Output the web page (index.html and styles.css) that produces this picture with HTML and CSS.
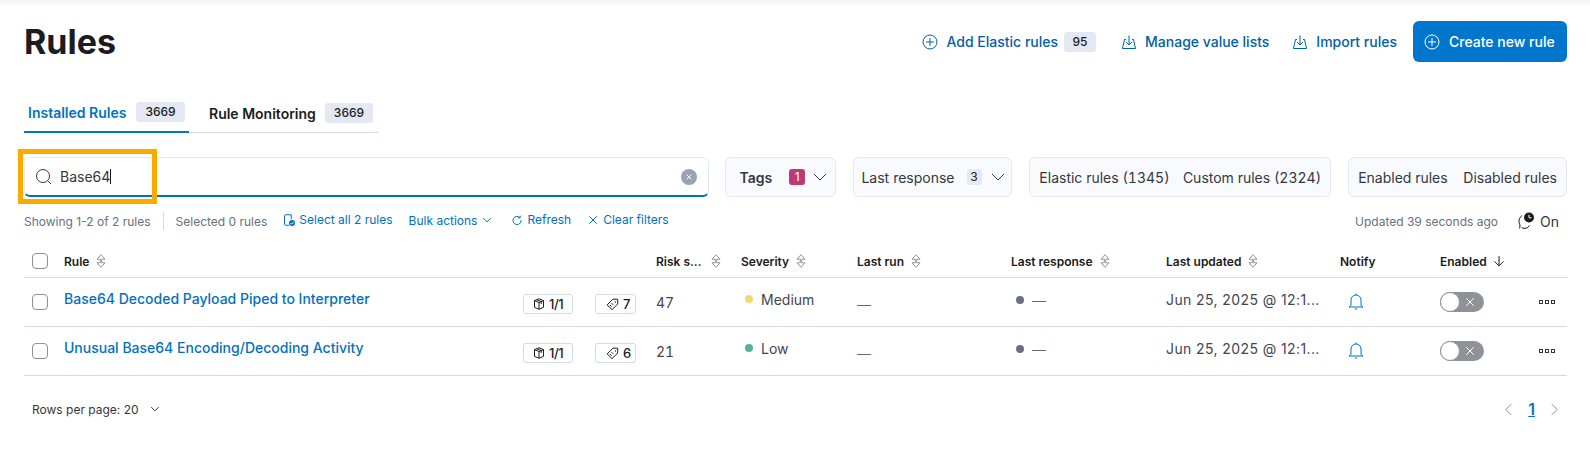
FILE: index.html
```html
<!DOCTYPE html>
<html lang="en">
<head>
<meta charset="utf-8">
<title>Rules</title>
<link rel="stylesheet" href="styles.css">
</head>
<body>
<div class="top-shadow"></div>
<main class="page">
  <header class="page-header">
    <h1 class="title">Rules</h1>
    <div class="actions">
      <a class="action action-add">
        <svg class="ic16" viewBox="0 0 16 16"><circle cx="8" cy="8" r="7" class="st"/><path d="M8 4v8M4 8h8" class="st"/></svg>
        <span>Add Elastic rules</span><span class="badge badge-add">95</span>
      </a>
      <a class="action action-manage">
        <svg class="ic16" viewBox="0 0 16 16"><path d="M5 5.500H3.500L1.500 14.500h13L12.500 5.500H11M8 1.500v9.500M5 8l3 3 3-3" class="st"/></svg>
        <span>Manage value lists</span>
      </a>
      <a class="action action-import">
        <svg class="ic16" viewBox="0 0 16 16"><path d="M5 5.500H3.500L1.500 14.500h13L12.500 5.500H11M8 1.500v9.500M5 8l3 3 3-3" class="st"/></svg>
        <span>Import rules</span>
      </a>
      <a class="create">
        <svg class="ic16" viewBox="0 0 16 16"><circle cx="8" cy="8" r="7" class="st"/><path d="M8 4v8M4 8h8" class="st"/></svg>
        <span>Create new rule</span>
      </a>
    </div>
  </header>

  <nav class="tabs">
    <a class="tab tab-active"><span>Installed Rules</span><span class="badge">3669</span></a>
    <a class="tab"><span>Rule Monitoring</span><span class="badge">3669</span></a>
  </nav>

  <section class="filters">
    <div class="search">
      <svg class="ic16 search-ic" viewBox="0 0 16 16"><circle cx="7" cy="7" r="6.500" class="st"/><path d="m11.700 11.700 3.300 3.300" class="st"/></svg>
      <span class="search-text">Base64</span><span class="caret"></span>
      <span class="clear"><svg viewBox="0 0 16 16"><path d="m5.500 5.500 5 5M10.500 5.500l-5 5" class="st"/></svg></span>
      <span class="highlight"></span>
    </div>
    <div class="fgroup f-tags">
      <span class="strong">Tags</span><span class="count count-pink">1</span>
      <svg class="chev" viewBox="0 0 16 16"><path d="m2 5 6 6 6-6" class="st"/></svg>
    </div>
    <div class="fgroup f-resp">
      <span>Last response</span><span class="count">3</span>
      <svg class="chev" viewBox="0 0 16 16"><path d="m2 5 6 6 6-6" class="st"/></svg>
    </div>
    <div class="fgroup f-pair">
      <span>Elastic rules (1345)</span><span>Custom rules (2324)</span>
    </div>
    <div class="fgroup f-pair f-enabled">
      <span>Enabled rules</span><span>Disabled rules</span>
    </div>
  </section>

  <section class="status">
    <span class="muted">Showing 1-2 of 2 rules</span>
    <span class="divider"></span>
    <span class="muted">Selected 0 rules</span>
    <a class="slink s-select">
      <svg class="ic12" viewBox="0 0 16 16"><path d="M11 7V1H3a2 2 0 0 0-1 1v12l1 1h5" class="st"/><circle cx="12" cy="12" r="4" class="fill"/><path d="m10 12 1.500 1.500 2.500-2.500" class="st-w"/></svg>
      <span>Select all 2 rules</span>
    </a>
    <a class="slink s-bulk"><span>Bulk actions</span><svg class="ic10" viewBox="0 0 16 16"><path d="m2 5 6 6 6-6" class="st"/></svg></a>
    <a class="slink s-refresh">
      <svg class="ic10" viewBox="0 0 16 16"><path d="M12.500 4A6.500 6.500 0 1 0 14.500 8" class="st"/><path d="M9.500 4.500h3.500V1" class="st"/></svg>
      <span>Refresh</span>
    </a>
    <a class="slink s-clear">
      <svg class="ic10" viewBox="0 0 16 16"><path d="m2 2 12 12M14 2 2 14" class="st"/></svg>
      <span>Clear filters</span>
    </a>
    <span class="muted updated">Updated 39 seconds ago</span>
    <svg class="refresh-clock" viewBox="0 0 18 18"><path d="M5 3.500A7 7 0 0 0 3 13M4.800 15.500 7 16.500M3 13l-.300 3.500M12.500 13.500A6 6 0 0 1 7 16.500" class="st"/><circle cx="12" cy="5.500" r="5" class="fill"/><path d="M12 2.800v3h2.500" class="st-w"/></svg>
    <span class="on">On</span>
  </section>

  <section class="table">
    <div class="row head">
      <span class="cell-check"><span class="checkbox"></span></span>
      <span class="th th-rule">Rule<svg class="sort" viewBox="0 0 10 14"><path d="M5 .700 1 5.200h3.300v3.600H1l4 4.500 4-4.500H5.700V5.200H9z" class="st"/></svg></span>
      <span class="th">Risk s...<svg class="sort sort-risk" viewBox="0 0 10 14"><path d="M5 .700 1 5.200h3.300v3.600H1l4 4.500 4-4.500H5.700V5.200H9z" class="st"/></svg></span>
      <span class="th">Severity<svg class="sort" viewBox="0 0 10 14"><path d="M5 .700 1 5.200h3.300v3.600H1l4 4.500 4-4.500H5.700V5.200H9z" class="st"/></svg></span>
      <span class="th">Last run<svg class="sort" viewBox="0 0 10 14"><path d="M5 .700 1 5.200h3.300v3.600H1l4 4.500 4-4.500H5.700V5.200H9z" class="st"/></svg></span>
      <span class="th">Last response<svg class="sort" viewBox="0 0 10 14"><path d="M5 .700 1 5.200h3.300v3.600H1l4 4.500 4-4.500H5.700V5.200H9z" class="st"/></svg></span>
      <span class="th">Last updated<svg class="sort" viewBox="0 0 10 14"><path d="M5 .700 1 5.200h3.300v3.600H1l4 4.500 4-4.500H5.700V5.200H9z" class="st"/></svg></span>
      <span class="th">Notify</span>
      <span class="th">Enabled<svg class="arrow" viewBox="0 0 16 16"><path d="M8 1.500v13M2 8.500l6 6 6-6" class="st"/></svg></span>
      <span></span>
    </div>

    <div class="row body">
      <span class="cell-check"><span class="checkbox"></span></span>
      <a class="rule-link">Base64 Decoded Payload Piped to Interpreter</a>
      <span class="chip chip-pkg"><svg class="ic12" viewBox="0 0 16 16"><path d="m8 1 6 2.500v9L8 15l-6-2.500v-9zM2 3.500 8 6l6-2.500M8 6v9M5 2.300l6 2.500V8" class="st"/></svg>1/1</span>
      <span class="chip chip-tag"><svg class="ic14" viewBox="0 0 16 16"><path d="M9 2.500h5.500V8L8 14.500 2.500 9zM11.500 5.500h.5v.5h-.5zM5.500 9l2 2M7.500 7l2 2" class="st"/></svg>7</span>
      <span class="num">47</span>
      <span class="sev"><span class="dot dot-med"></span>Medium</span>
      <span class="dash">—</span>
      <span class="resp"><span class="dot dot-gray"></span><span class="thin">—</span></span>
      <span class="date">Jun 25, 2025 @ 12:1...</span>
      <span class="bell-cell"><svg class="bell" viewBox="0 0 16 17"><path d="M1 14c1.500-.5 2-1.500 2-3V7a5 5 0 0 1 10 0v4c0 1.500.5 2.500 2 3zM8 .500V2M6.800 16h2.400" class="st"/></svg></span>
      <span class="toggle-cell"><span class="toggle"><span class="knob"></span><svg viewBox="0 0 16 16"><path d="m3 3 10 10M13 3 3 13" class="st-w"/></svg></span></span>
      <span class="dots"><i></i><i></i><i></i></span>
    </div>

    <div class="row body">
      <span class="cell-check"><span class="checkbox"></span></span>
      <a class="rule-link">Unusual Base64 Encoding/Decoding Activity</a>
      <span class="chip chip-pkg"><svg class="ic12" viewBox="0 0 16 16"><path d="m8 1 6 2.500v9L8 15l-6-2.500v-9zM2 3.500 8 6l6-2.500M8 6v9M5 2.300l6 2.500V8" class="st"/></svg>1/1</span>
      <span class="chip chip-tag"><svg class="ic14" viewBox="0 0 16 16"><path d="M9 2.500h5.500V8L8 14.500 2.500 9zM11.500 5.500h.5v.5h-.5zM5.500 9l2 2M7.500 7l2 2" class="st"/></svg>6</span>
      <span class="num">21</span>
      <span class="sev"><span class="dot dot-low"></span>Low</span>
      <span class="dash">—</span>
      <span class="resp"><span class="dot dot-gray"></span><span class="thin">—</span></span>
      <span class="date">Jun 25, 2025 @ 12:1...</span>
      <span class="bell-cell"><svg class="bell" viewBox="0 0 16 17"><path d="M1 14c1.500-.5 2-1.500 2-3V7a5 5 0 0 1 10 0v4c0 1.500.5 2.500 2 3zM8 .500V2M6.800 16h2.400" class="st"/></svg></span>
      <span class="toggle-cell"><span class="toggle"><span class="knob"></span><svg viewBox="0 0 16 16"><path d="m3 3 10 10M13 3 3 13" class="st-w"/></svg></span></span>
      <span class="dots"><i></i><i></i><i></i></span>
    </div>
  </section>

  <footer class="pager">
    <span class="rows">Rows per page: 20<svg class="ic10" viewBox="0 0 16 16"><path d="m2 5 6 6 6-6" class="st"/></svg></span>
    <span class="pages">
      <svg class="pg-chev" viewBox="0 0 10 16"><path d="M8 2 2 8l6 6" class="st"/></svg>
      <a class="pg-num">1</a>
      <svg class="pg-chev" viewBox="0 0 10 16"><path d="m2 2 6 6-6 6" class="st"/></svg>
    </span>
  </footer>
</main>
</body>
</html>
```
FILE: styles.css
```css
* { box-sizing: border-box; }
html, body { margin: 0; padding: 0; height: 450px; overflow: hidden; background: #fff; }
body { font-family: Inter, "Liberation Sans", sans-serif; color: #343741; font-size: 14px; }

.st { fill: none; stroke: currentColor; stroke-width: 1; vector-effect: non-scaling-stroke; }
.st-w { fill: none; stroke: #fff; stroke-width: 1; vector-effect: non-scaling-stroke; }
.fill { fill: currentColor; }
svg { display: block; flex: none; }
.ic16 { width: 16px; height: 16px; }
.ic14 { width: 14px; height: 14px; }
.ic12 { width: 12px; height: 12px; }
.ic10 { width: 10px; height: 10px; }

.top-shadow { height: 6px; margin-bottom: -6px; background: linear-gradient(#f1f2f4, #fff); }

.page { padding: 21px 23px 0 24px; }

.page-header { display: flex; justify-content: space-between; height: 41px; }
.title { margin: 0; font-size: 34px; line-height: 41px; font-weight: 700; color: #1a1c21; }
.actions { display: flex; align-items: center; }
.action { display: flex; align-items: center; gap: 8px; color: #0061a6; font-weight: 500; white-space: nowrap; }
.action-add { margin-right: 25px; }
.action-manage { margin-right: 23px; }
.action-import { margin-right: 16px; }
.badge { display: block; background: #e3e8f2; color: #1a1c21; font-size: 12px; font-weight: 500; line-height: 20px; padding: 0 9px; border-radius: 3px; }
.badge-add { margin-left: -2px; padding: 0 8.500px; }
.create { display: flex; align-items: center; gap: 9px; height: 41px; width: 154px; padding-left: 11px; background: #0077cc; color: #fff; border-radius: 6px; font-weight: 500; }

.tabs { display: flex; width: 354px; margin-top: 31px; height: 40px; border-bottom: 1px solid #d3dae6; }
.tab { display: flex; align-items: center; gap: 9px; height: 40px; padding: 0 4px; font-weight: 600; color: #1a1c21; white-space: nowrap; }
.tab:first-child { width: 165px; margin-right: 16px; gap: 10px; }
.tab-active { color: #0071c2; border-bottom: 2px solid #0077cc; }

.filters { display: flex; gap: 17px; margin-top: 24px; position: relative; }
.search { position: relative; display: flex; align-items: center; width: 685px; height: 40px; margin-right: -1px; padding-left: 11px; background: #fff; border: 1px solid #e3e8f2; border-bottom: 2px solid #0071c2; border-radius: 6px; }
.search-ic { color: #343741; }
.search-text { margin-left: 8px; color: #343741; }
.caret { width: 1px; height: 15px; background: #1a1c21; }
.clear { position: absolute; right: 11px; top: 11px; width: 16px; height: 16px; border-radius: 50%; background: #98a2b3; color: #fff; }
.highlight { position: absolute; left: -7px; top: -9px; width: 139px; height: 55px; border: 5px solid #fbab00; }

.fgroup { display: flex; align-items: center; height: 40px; background: #f8fafd; border: 1px solid #e3e8f2; border-radius: 6px; color: #343741; }
.strong { font-weight: 600; }
.f-tags { width: 112px; padding-left: 14px; }
.f-tags .chev { margin-left: 7px; }
.f-resp { width: 159px; padding-left: 7px; }
.count { margin-left: 12px; width: 15px; text-align: center; font-size: 12px; line-height: 16px; background: #e3e8f2; color: #1a1c21; border-radius: 3px; }
.count-pink { width: 16px; margin-left: 17px; background: #bc3a76; color: #fff; }
.chev { width: 16px; height: 16px; margin-left: 8px; color: #343741; }
.f-pair { padding: 0 9px; width: 302px; justify-content: space-between; font-variant-numeric: tabular-nums; }
.f-enabled { width: 219px; }

.status { display: flex; align-items: center; height: 18px; margin-top: 15px; font-size: 12px; }
.muted { color: #69707d; }
.divider { width: 1px; height: 18px; background: #d3dae6; margin: 0 12px; }
.slink { display: flex; align-items: center; gap: 5px; margin-bottom: 3px; color: #0071c2; }
.s-select { margin-left: 16px; gap: 4px; }
.s-bulk { margin-left: 16px; margin-bottom: 2px; }
.s-refresh { margin-left: 20px; }
.s-clear { margin-left: 17px; }
.updated { margin-left: auto; }
.refresh-clock { width: 18px; height: 18px; margin-left: 19px; color: #1a1c21; }
.on { margin: 0 8px 0 5px; font-size: 14px; }

.table { margin-top: 15px; }
.row { display: grid; grid-template-columns: 40px 459px 72px 61px 85px 116px 154px 155px 174px 100px 99px 28px; border-bottom: 1px solid #d3dae6; }
.head { height: 33px; align-items: center; }
.body { height: 49px; font-size: 14px; color: #414652; }
.cell-check { padding-left: 8px; }
.body .cell-check { padding-top: 16px; }
.checkbox { display: block; width: 16px; height: 16px; background: #fff; border: 1px solid #8d9098; border-radius: 4px; }

.th { display: flex; align-items: center; gap: 7px; font-size: 12px; font-weight: 600; color: #1a1c21; white-space: nowrap; }
.th-rule { grid-column: span 3; }
.sort { width: 10px; height: 14px; color: #8f95a0; }
.sort-risk { margin-left: 2px; }
.arrow { width: 12px; height: 12px; margin-left: -1px; }

.rule-link { padding-top: 11px; line-height: 20px; color: #0071c2; font-weight: 500; }
.chip { display: flex; align-items: center; align-self: start; gap: 4px; height: 20px; margin-top: 16px; padding: 0 8px 0 9px; background: #fff; border: 1px solid #d3dae6; border-radius: 3px; font-size: 13px; font-weight: 500; color: #1a1c21; }
.chip-pkg { width: 50px; letter-spacing: -.5px; }
.chip-tag { width: 41px; }
.num { padding-top: 15px; line-height: 20px; font-variant-numeric: tabular-nums; }
.sev { display: flex; align-items: center; gap: 8px; height: 20px; margin-top: 11px; }
.dot { display: block; width: 8px; height: 8px; border-radius: 50%; }
.dot-med { background: #f1d86f; margin-left: 4px; }
.dot-low { background: #54b399; margin-left: 4px; }
.dot-gray { background: #69707d; margin-left: 5px; }
.dash { padding-top: 17px; line-height: 20px; font-weight: 300; }
.thin { font-weight: 300; }
.resp { display: flex; align-items: center; gap: 8px; height: 20px; margin-top: 12px; }
.date { padding-top: 12px; line-height: 20px; letter-spacing: .4px; white-space: nowrap; }
.bell-cell { padding: 15px 0 0 8px; color: #0071c2; }
.bell { width: 16px; height: 17px; }
.toggle-cell { padding-top: 14px; }
.toggle { display: block; position: relative; width: 44px; height: 20px; background: #919297; border-radius: 10px; }
.toggle svg { position: absolute; right: 8px; top: 4px; width: 12px; height: 12px; }
.knob { position: absolute; left: 0; top: 0; width: 20px; height: 20px; background: #fff; border: 1px solid #919297; border-radius: 50%; }
.dots { display: flex; gap: 2px; align-items: start; padding-top: 22px; }
.dots i { display: block; width: 4px; height: 4px; border: 1px solid #343741; }

.pager { display: flex; justify-content: space-between; align-items: center; margin-top: 22px; height: 22px; padding: 0 8px; }
.rows { display: flex; align-items: center; gap: 11px; font-size: 12px; color: #343741; }
.pages { display: flex; align-items: center; gap: 15px; }
.pg-chev { width: 9px; height: 15px; color: #8a919c; }
.pg-num { font-size: 16px; font-weight: 600; color: #0077cc; text-decoration: underline; }
```
